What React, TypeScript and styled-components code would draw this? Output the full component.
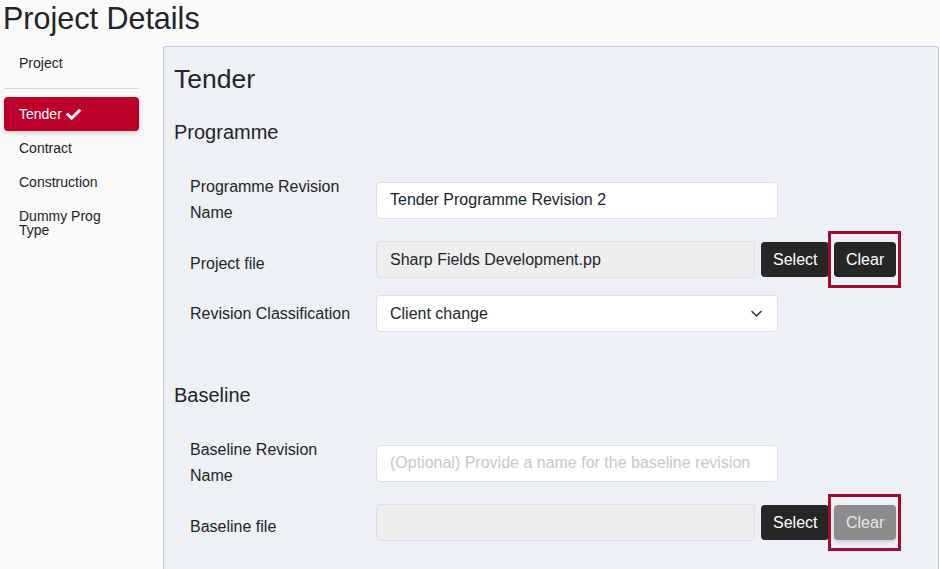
import React from "react";
import styled, { createGlobalStyle } from "styled-components";
import { FaCheck } from "react-icons/fa";

const GlobalStyle = createGlobalStyle`
  html, body {
    margin: 0;
    padding: 0;
    background: #fafafa;
    font-family: "Liberation Sans", Arial, sans-serif;
    color: #212529;
  }
  * { box-sizing: border-box; }
`;

const Page = styled.div`
  padding: 0 1px 0 4px;
  height: 569px;
  overflow: hidden;
`;

const Title = styled.h1`
  margin: 0 0 10px -1px;
  font-size: 30.5px;
  line-height: 36px;
  font-weight: 400;
  color: #212529;
`;

const Body = styled.div`
  display: flex;
  align-items: flex-start;
  gap: 24px;
`;

const Sidebar = styled.nav`
  width: 135px;
  flex: none;
  display: flex;
  flex-direction: column;
`;

const NavItem = styled.div<{ $active?: boolean }>`
  height: ${(p) => (p.$active ? "34px" : "auto")};
  padding: 10px 15px;
  font-size: 14px;
  line-height: 14px;
  border-radius: 4px;
  color: ${(p) => (p.$active ? "#ffffff" : "#212529")};
  background: ${(p) => (p.$active ? "#bd0029" : "transparent")};
  box-shadow: ${(p) => (p.$active ? "0 2px 5px rgba(0,0,0,0.18)" : "none")};
  display: flex;
  align-items: center;
  gap: 4px;
`;

const NavDivider = styled.hr`
  margin: 8px 0;
  border: 0;
  border-top: 1px solid #d6d6d6;
`;

const Panel = styled.main`
  flex: 1;
  min-height: 560px;
  background: #edf0f5;
  border: 1px solid #bcc6de;
  border-bottom: 0;
  border-radius: 3px 3px 0 0;
  padding: 16px 10px 30px 10px;
`;

const PanelTitle = styled.h2`
  margin: 0;
  font-size: 26.5px;
  line-height: 32px;
  font-weight: 400;
`;

const Section = styled.section<{ $gap: number }>`
  margin-top: ${(p) => p.$gap}px;
`;

const SectionTitle = styled.h3`
  margin: 0;
  font-size: 20px;
  line-height: 24px;
  font-weight: 400;
`;

const Rows = styled.div`
  margin-top: 30px;
  display: flex;
  flex-direction: column;
  gap: 15px;
`;

const Row = styled.div<{ $file?: boolean }>`
  display: flex;
  align-items: center;
  padding-left: 16px;
  margin-bottom: ${(p) => (p.$file ? "2px" : "0")};
`;

const Label = styled.label<{ $offset?: boolean }>`
  width: 186px;
  flex: none;
  padding-right: 16px;
  font-size: 16px;
  line-height: 26px;
  margin-top: ${(p) => (p.$offset ? "9px" : "0")};
`;

const TextInput = styled.input<{ $width?: number }>`
  width: ${(p) => (p.$width ? `${p.$width}px` : "auto")};
  flex: ${(p) => (p.$width ? "none" : "1")};
  height: 37px;
  border: 1px solid #dcdfe3;
  border-radius: 4px;
  padding: 0 13px;
  font-family: inherit;
  font-size: 16px;
  color: #212529;
  background: #ffffff;
  outline: none;
  &::placeholder { color: #c6c8cb; }
  &:read-only { background: #eeeeee; }
`;

const SelectWrap = styled.div`
  position: relative;
  width: 402px;
  flex: none;
`;

const SelectBox = styled.select`
  appearance: none;
  width: 100%;
  height: 37px;
  border: 1px solid #dcdfe3;
  border-radius: 4px;
  padding: 0 13px;
  background: #ffffff;
  font-family: inherit;
  font-size: 16px;
  color: #212529;
  outline: none;
`;

const Chevron = styled.svg`
  position: absolute;
  right: 16px;
  top: 15px;
  width: 11px;
  height: 8px;
  pointer-events: none;
`;

const FileGroup = styled.div`
  width: 520px;
  flex: none;
  display: flex;
  align-items: center;
`;

const Button = styled.button<{ $disabled?: boolean }>`
  height: 35px;
  padding: 0 12px;
  border: 0;
  border-radius: 4px;
  font-family: inherit;
  font-size: 16px;
  color: ${(p) => (p.$disabled ? "#e6e6e6" : "#ffffff")};
  background: ${(p) => (p.$disabled ? "#8c8c8c" : "#262626")};
  box-shadow: ${(p) => (p.$disabled ? "0 2px 4px rgba(0,0,0,0.15)" : "none")};
`;

const SelectButton = styled(Button)`
  margin-left: 6px;
  width: 68px;
`;

const Highlight = styled.div`
  position: relative;
  margin-left: 5px;
  display: flex;
  &::after {
    content: "";
    position: absolute;
    top: -11px;
    bottom: -11px;
    left: -6px;
    right: -5px;
    border: 3px solid #a00c30;
    pointer-events: none;
  }
`;

const ClearButton = styled(Button)`
  width: 62px;
`;

const FileRow = ({ label, value, clearDisabled }: { label: string; value: string; clearDisabled?: boolean }) => (
  <Row $file>
    <Label $offset>{label}</Label>
    <FileGroup>
      <TextInput readOnly value={value} />
      <SelectButton>Select</SelectButton>
      <Highlight>
        <ClearButton $disabled={clearDisabled}>Clear</ClearButton>
      </Highlight>
    </FileGroup>
  </Row>
);

export default function App() {
  return (
    <>
      <GlobalStyle />
      <Page>
        <Title>Project Details</Title>
        <Body>
          <Sidebar>
            <NavItem>Project</NavItem>
            <NavDivider />
            <NavItem $active>
              Tender <FaCheck size={15} />
            </NavItem>
            <NavItem>Contract</NavItem>
            <NavItem>Construction</NavItem>
            <NavItem>Dummy Prog Type</NavItem>
          </Sidebar>
          <Panel>
            <PanelTitle>Tender</PanelTitle>
            <Section $gap={25}>
              <SectionTitle>Programme</SectionTitle>
              <Rows>
                <Row>
                  <Label>Programme Revision Name</Label>
                  <TextInput $width={402} defaultValue="Tender Programme Revision 2" />
                </Row>
                <FileRow label="Project file" value="Sharp Fields Development.pp" />
                <Row>
                  <Label>Revision Classification</Label>
                  <SelectWrap>
                    <SelectBox defaultValue="client">
                      <option value="client">Client change</option>
                    </SelectBox>
                    <Chevron viewBox="0 0 11 8">
                      <path d="M1 1.5 L5.5 6 L10 1.5" fill="none" stroke="#343a40" strokeWidth="1.6" strokeLinecap="round" strokeLinejoin="round" />
                    </Chevron>
                  </SelectWrap>
                </Row>
              </Rows>
            </Section>
            <Section $gap={51}>
              <SectionTitle>Baseline</SectionTitle>
              <Rows>
                <Row>
                  <Label>Baseline Revision Name</Label>
                  <TextInput $width={402} placeholder="(Optional) Provide a name for the baseline revision" />
                </Row>
                <FileRow label="Baseline file" value="" clearDisabled />
              </Rows>
            </Section>
          </Panel>
        </Body>
      </Page>
    </>
  );
}
